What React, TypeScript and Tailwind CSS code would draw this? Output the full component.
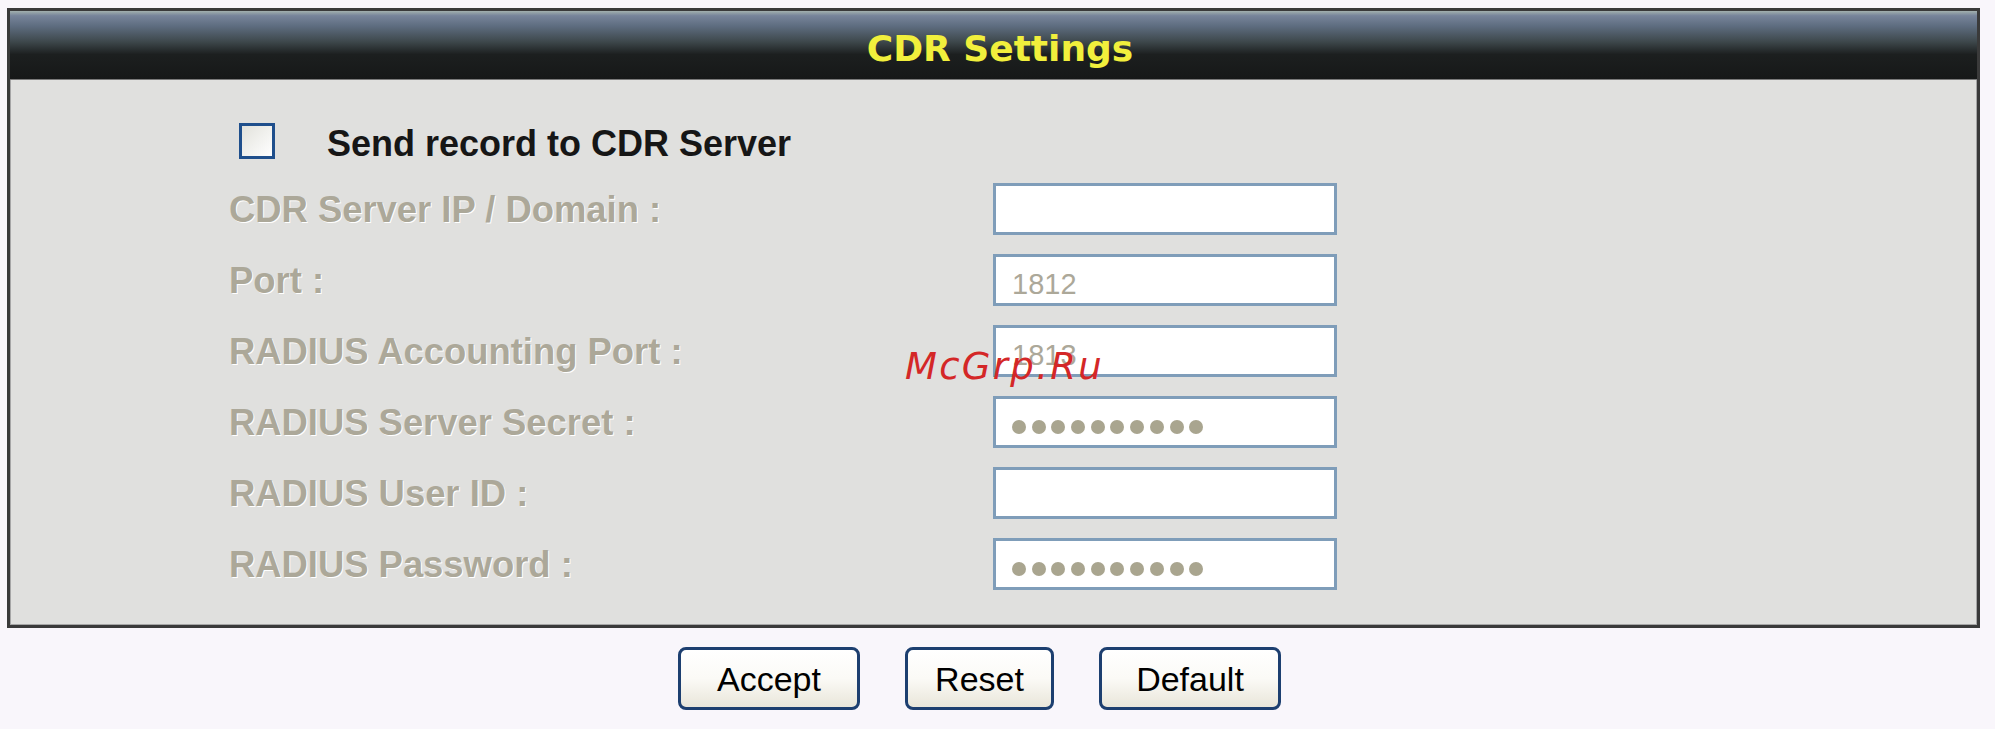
const rows: { label: string; value?: string; secret?: boolean }[] = [
  { label: 'CDR Server IP / Domain :' },
  { label: 'Port :', value: '1812' },
  { label: 'RADIUS Accounting Port :', value: '1813' },
  { label: 'RADIUS Server Secret :', secret: true },
  { label: 'RADIUS User ID :' },
  { label: 'RADIUS Password :', secret: true },
]

function Field ({ value, secret }: { value?: string; secret?: boolean }) {
  return (
    <div className="w-[344px] h-[52px] bg-white border-[3px] border-[#7f9db9] flex items-center pl-[16px] pt-[9px]">
      {secret ? (
        <div className="flex gap-[5.7px]">
          {Array.from({ length: 10 }).map((_, i) => (
            <span key={i} className="w-[14px] h-[14px] rounded-full bg-[#a9a58f]" />
          ))}
        </div>
      ) : (
        <span className="text-[29px] leading-none text-[#aca899] [text-shadow:1px_1px_0_#ffffff]">{value}</span>
      )}
    </div>
  )
}

function Button ({ label, width }: { label: string; width: string }) {
  return (
    <button
      className={`${width} h-[63px] rounded-[8px] border-[3px] border-[#1d3f70] bg-gradient-to-b from-white via-[#fbfaf6] to-[#e9e6da] text-[34px] text-black leading-none`}
    >
      {label}
    </button>
  )
}

export default function App () {
  return (
    <div className="relative w-[1995px] h-[729px] overflow-hidden bg-[#f9f6fb] font-['Liberation_Sans',Arial,sans-serif] pt-[8px]">
      <div className="ml-[7px] w-[1973px] border-[3px] border-[#3a3a3a] bg-[#e0e0de] shadow-[inset_0_0_0_1px_#a6a6a6]">
        <div className="h-[69px] flex items-center justify-center pl-[13px] bg-[linear-gradient(to_bottom,#a2b0ae_0%,#77849a_7%,#5e6d80_22%,#3e484c_45%,#1c1f1f_64%,#161818_100%)] border-b border-[#7a7a7a]">
          <h1 className="font-['DejaVu_Sans',Verdana,sans-serif] font-bold text-[36px] text-[#f1ef3c] pt-[7px] leading-none">
            {'CDR Settings'}
          </h1>
        </div>

        <div className="pt-[38px] pb-[35px] pl-[219px] flex flex-col gap-[19px]">
          <div className="h-[46px] flex items-center">
            <span className="ml-[10px] w-[36px] h-[36px] border-[3px] border-[#1f4f8c] bg-gradient-to-br from-[#e2e2dc] to-white" />
            <span className="ml-[52px] text-[36px] font-bold text-[#161616] pt-[6px]">{'Send record to CDR Server'}</span>
          </div>

          {rows.map((row) => (
            <div key={row.label} className="h-[52px] flex items-center">
              <span className="w-[764px] text-[36.4px] font-bold text-[#aca899] [text-shadow:1px_1px_0_#ffffff] pt-[3px]">
                {row.label}
              </span>
              <Field value={row.value} secret={row.secret} />
            </div>
          ))}
        </div>
      </div>

      <div className="mt-[19px] flex justify-center gap-[45px] pr-[36px]">
        <Button label="Accept" width="w-[182px]" />
        <Button label="Reset" width="w-[149px]" />
        <Button label="Default" width="w-[182px]" />
      </div>

      <span className="absolute left-[905px] top-[348px] font-['DejaVu_Sans',Verdana,sans-serif] italic text-[37px] leading-none tracking-[2.3px] text-[#d42727]">
        {'McGrp.Ru'}
      </span>
    </div>
  )
}
